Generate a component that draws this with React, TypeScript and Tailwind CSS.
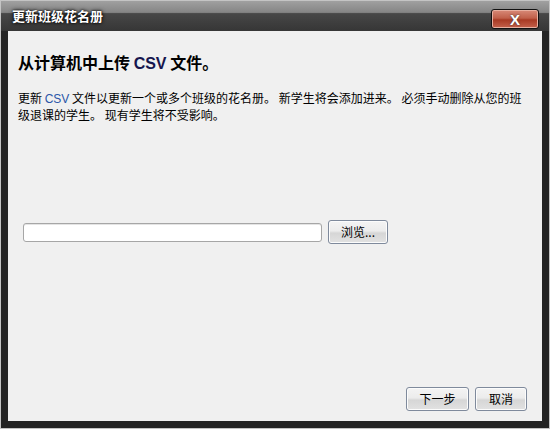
export default function App() {
  const btn =
    "h-[24px] rounded-[3px] border border-[#7f8a9c] bg-[linear-gradient(to_bottom,#f4f4f4_0%,#ececec_45%,#d6d6d6_55%,#e2e2e2_100%)] shadow-[inset_0_0_0_1px_#fcfcfc] text-[12px] text-black flex items-center justify-center";
  return (
    <div
      className="w-[550px] h-[429px] border border-[#c4c4c4] bg-[#242424] flex flex-col"
      style={{ fontFamily: '"Noto Sans CJK SC", "Liberation Sans", sans-serif' }}
    >
      {/* title bar */}
      <div className="h-[30px] flex items-start justify-between bg-[linear-gradient(to_bottom,#a0a0a0_0%,#858585_38%,#474747_42%,#363636_100%)]">
        <span className="ml-[11px] mt-[6px] text-[13px] leading-[18px] font-bold text-white [text-shadow:0_0_4px_#000,0_0_2px_#000]">
          更新班级花名册
        </span>
        <div className="mr-[10px] mt-[8px] w-[48px] h-[20px] rounded-[3px] border border-[#111] bg-[linear-gradient(to_bottom,#d88a78_0%,#c0604a_45%,#a83a24_55%,#c5624c_100%)] shadow-[inset_0_0_0_1px_#e8b0a0] flex items-center justify-center">
          <span className="text-white font-bold text-[15px] leading-none [text-shadow:0_0_2px_#333]" style={{ fontFamily: '"Liberation Sans", sans-serif' }}>
            X
          </span>
        </div>
      </div>

      {/* body */}
      <div className="flex-1 mx-[7px] mb-[7px] bg-[#f0f0f0] flex flex-col">
        <h1 className="mt-[20px] ml-[10px] text-[16px] leading-[22px] font-bold text-black">
          从计算机中上传 <span className="text-[#16164e]" style={{ fontFamily: '"Liberation Sans", sans-serif' }}>CSV</span> 文件。
        </h1>
        <p className="mt-[15px] ml-[10px] mr-[10px] text-[12px] leading-[15px] text-black">
          更新 <span className="text-[#2b56a8]" style={{ fontFamily: '"Liberation Sans", sans-serif' }}>CSV</span> 文件以更新一个或多个班级的花名册。 新学生将会添加进来。 必须手动删除从您的班级退课的学生。 现有学生将不受影响。
        </p>

        <div className="mt-[98px] ml-[15px] flex items-center gap-[6px]">
          <div className="w-[299px] h-[19px] rounded-[3px] border border-[#a6a6a6] bg-white shadow-[inset_0_1px_0_#e4e4e4]" />
          <button className={`${btn} w-[60px] h-[23px]`}>浏览...</button>
        </div>

        <div className="mt-auto mb-[10px] mr-[15px] flex justify-end gap-[6px]">
          <button className={`${btn} w-[63px]`}>下一步</button>
          <button className={`${btn} w-[52px]`}>取消</button>
        </div>
      </div>
    </div>
  );
}
